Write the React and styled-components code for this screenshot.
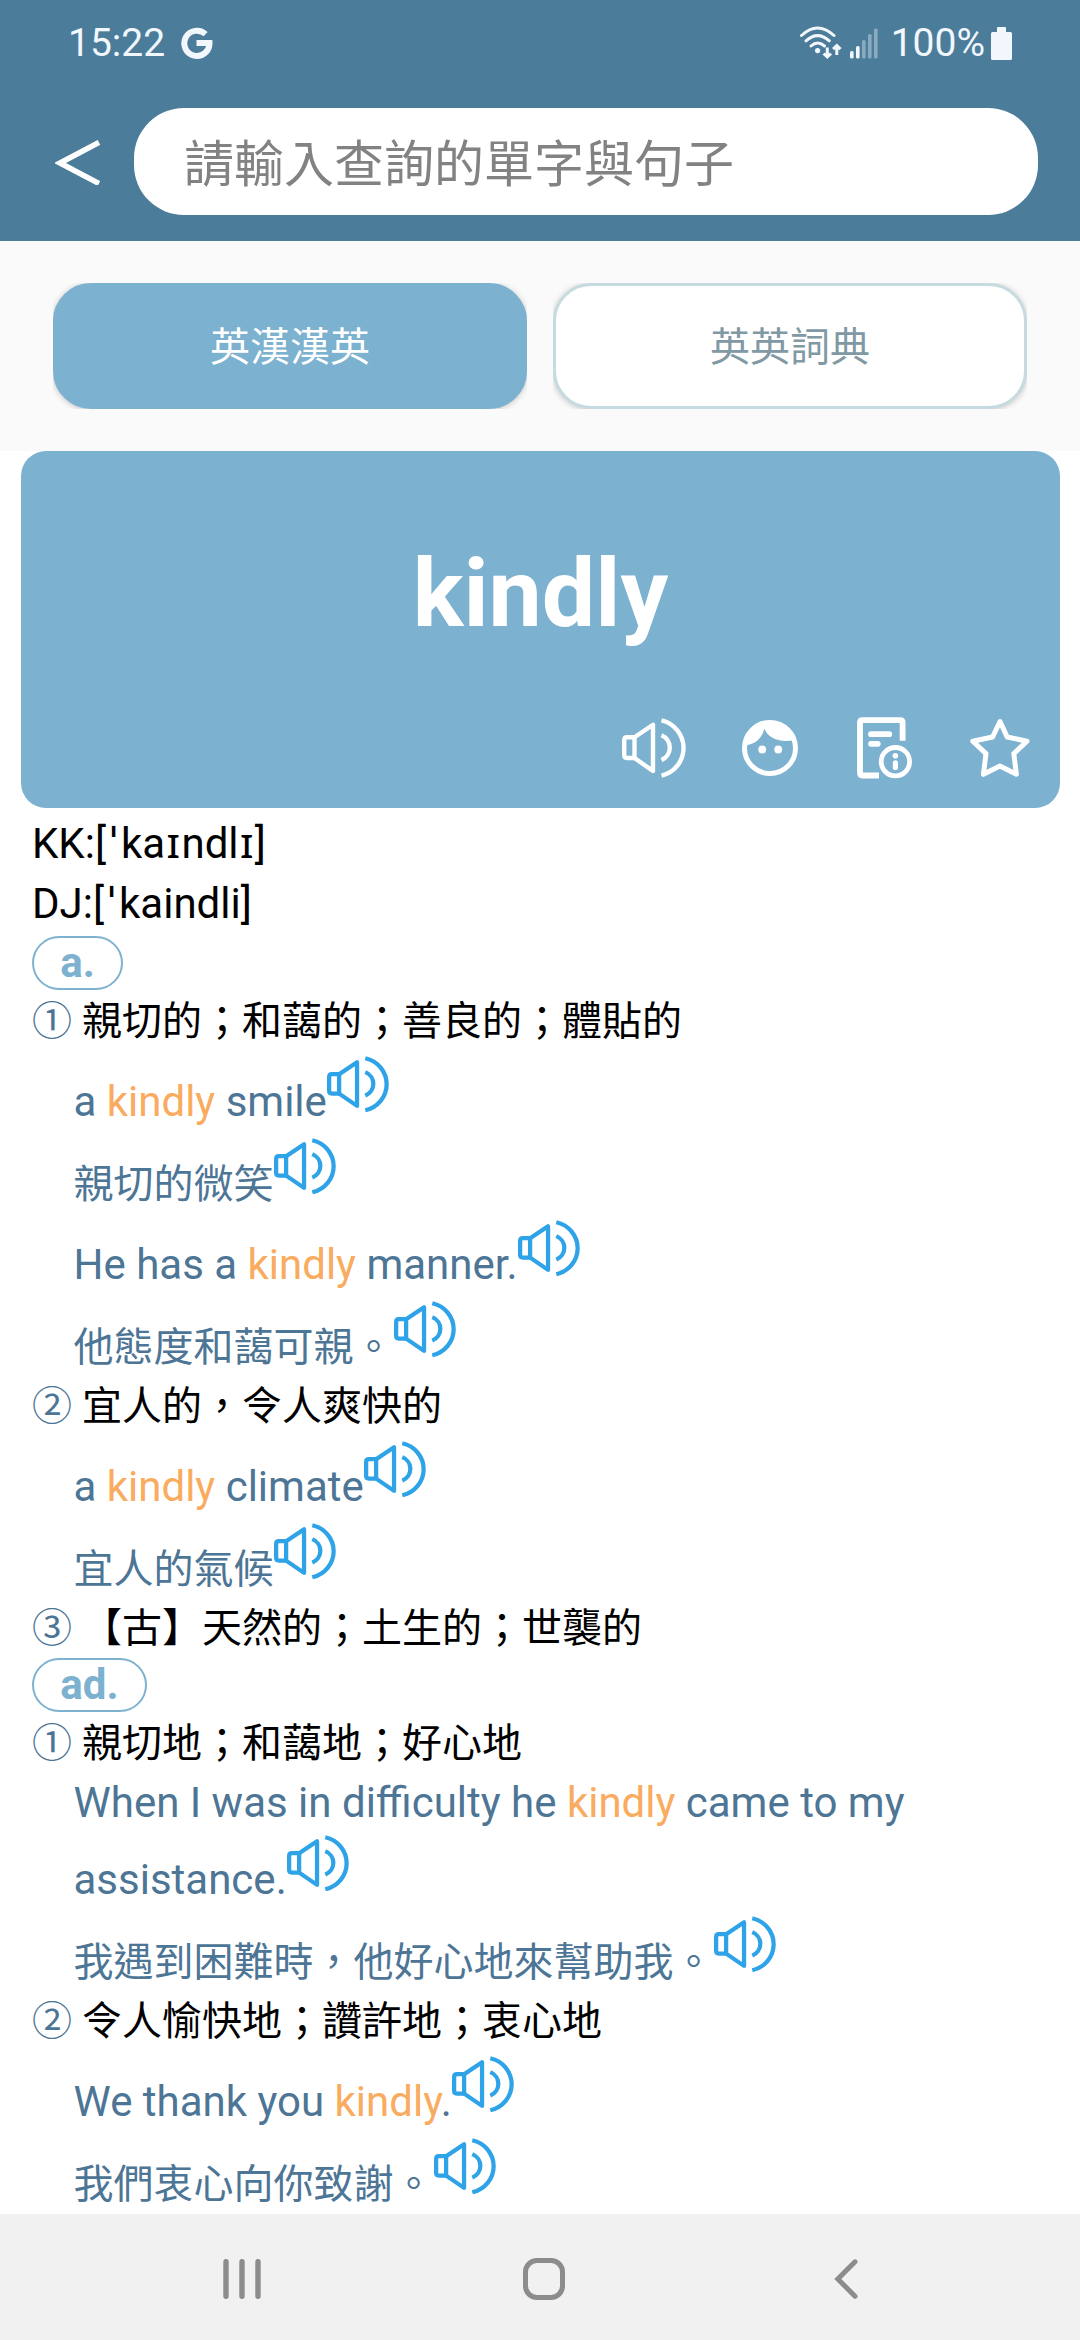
import styled, { createGlobalStyle } from 'styled-components';

const GlobalStyle = createGlobalStyle`
  * { box-sizing: border-box; }

  body {
    margin: 0;
    background: #ffffff;
    font-family: Roboto, 'Noto Sans CJK TC', 'Noto Sans', sans-serif;
  }

  svg { display: block; flex-shrink: 0; }
`;

const Screen = styled.div`
  display: flex;
  flex-direction: column;
  width: 1080px;
  height: 2340px;
  overflow: hidden;
  background: #ffffff;
`;

const Header = styled.header`
  height: 241px;
  background: #4b7d9a;
`;

const StatusBar = styled.div`
  display: flex;
  align-items: center;
  justify-content: space-between;
  height: 86px;
  padding: 0 68px;
  color: #f1f7fd;
  font-size: 39px;
  line-height: 46px;
`;

const StatusGroup = styled.div`
  display: flex;
  align-items: center;
`;

const Clock = styled.span`
  margin-right: 16px;
`;

const Signal = styled.span`
  margin-left: 8px;
`;

const Percent = styled.span`
  margin: 0 6px 0 13px;
`;

const SearchRow = styled.div`
  display: flex;
  align-items: center;
  margin-top: 22px;
  padding: 0 42px 0 55px;
  gap: 34px;
`;

const SearchBox = styled.div`
  display: flex;
  align-items: center;
  flex: 1;
  height: 107px;
  padding: 0 0 4px 50px;
  border-radius: 50px;
  background: #ffffff;
  color: #828282;
  font-family: 'Noto Sans CJK TC', sans-serif;
  font-size: 50px;
  line-height: 70px;
`;

const Tabs = styled.div`
  display: flex;
  gap: 26px;
  height: 210px;
  padding: 42px 53px;
  background: #fafafa;
`;

const TabSlot = styled.div`
  flex: 1;
  height: 126px;
  overflow: hidden;
`;

const Tab = styled.div`
  display: flex;
  align-items: center;
  justify-content: center;
  height: 100%;
  padding-bottom: 4px;
  border: 3px solid ${({ $active }) => ($active ? '#7cb1d0' : '#c6dbdf')};
  border-radius: 38px;
  background: ${({ $active }) => ($active ? '#7cb1d0' : '#ffffff')};
  color: ${({ $active }) => ($active ? '#ffffff' : '#8199a4')};
  box-shadow: 0 1px 6px rgba(0, 0, 0, 0.22);
  font-family: 'Noto Sans CJK TC', sans-serif;
  font-size: 40px;
  line-height: 58px;
`;

const WordCard = styled.section`
  display: flex;
  flex-direction: column;
  height: 357px;
  margin: 0 20px 0 21px;
  border-radius: 25px;
  background: #7cb1d0;
  color: #ffffff;
`;

const Word = styled.h1`
  margin: 87px 0 0;
  font-size: 95px;
  font-weight: 700;
  line-height: 112px;
  text-align: center;
`;

const Actions = styled.div`
  display: flex;
  justify-content: flex-end;
  margin-top: 67px;
  padding-right: 2px;
`;

const Action = styled.div`
  display: flex;
  align-items: center;
  justify-content: center;
  width: 115.3px;
  height: 62px;
`;

const Definition = styled.main`
  flex: 1;
  padding: 6px 0 0 32px;
  color: #000000;
`;

const Phonetic = styled.div`
  height: 60px;
  font-size: 42px;
  line-height: 60px;
`;

const IpaMark = styled.span`
  display: inline-block;
  width: ${({ $stress }) => ($stress ? '15px' : '16.3px')};
  font-family: 'Noto Sans', sans-serif;
  line-height: 48px;
  text-align: center;
`;

const PartRow = styled.div`
  display: flex;
  align-items: center;
  height: 57.3px;
`;

const PartBadge = styled.span`
  height: 54px;
  padding: 0 26.3px;
  border: 2px solid #7fb2cf;
  border-radius: 27px;
  color: #7cb1d0;
  font-size: 42px;
  font-weight: 700;
  line-height: 50px;
`;

const Sense = styled.div`
  display: flex;
  align-items: center;
  gap: 10px;
  height: 58.5px;
  padding-bottom: 5px;
  font-family: 'Noto Sans CJK TC', sans-serif;
  font-size: 40px;
  line-height: 58px;
  white-space: nowrap;
`;

const SenseNumber = styled.span`
  color: #4d7595;
`;

const ExampleLine = styled.div`
  display: flex;
  align-items: flex-end;
  height: ${({ $wrapped }) => ($wrapped ? '55.8px' : '81.6px')};
  padding-left: 41.5px;
  color: #4d7595;
  white-space: nowrap;
`;

const English = styled.span`
  margin-bottom: ${({ $wrapped }) => ($wrapped ? '0' : '4.5px')};
  font-size: 42px;
  line-height: 50px;
`;

const Chinese = styled.span`
  margin-bottom: 3px;
  font-family: 'Noto Sans CJK TC', sans-serif;
  font-size: 40px;
  line-height: 58px;
`;

const Keyword = styled.span`
  color: #f9ab60;
`;

const InlineSpeaker = styled.span`
  margin-bottom: 18.5px;
  color: #2ea3e8;
`;

const NavBar = styled.nav`
  display: flex;
  justify-content: center;
  align-items: center;
  height: 126px;
  padding: 4px 0 0 8px;
  background: #f1f1f1;
`;

const NavItem = styled.div`
  display: flex;
  justify-content: center;
  width: 302px;
`;

const entries = [
  {
    part: 'a.',
    senses: [
      {
        number: '①',
        text: '親切的；和藹的；善良的；體貼的',
        examples: [
          { en: 'a *kindly* smile' },
          { zh: '親切的微笑' },
          { en: 'He has a *kindly* manner.' },
          { zh: '他態度和藹可親。' },
        ],
      },
      {
        number: '②',
        text: '宜人的，令人爽快的',
        examples: [{ en: 'a *kindly* climate' }, { zh: '宜人的氣候' }],
      },
      { number: '③', text: '【古】天然的；土生的；世襲的', examples: [] },
    ],
  },
  {
    part: 'ad.',
    senses: [
      {
        number: '①',
        text: '親切地；和藹地；好心地',
        examples: [
          { en: 'When I was in difficulty he *kindly* came to my', wrapped: true },
          { en: 'assistance.' },
          { zh: '我遇到困難時，他好心地來幫助我。' },
        ],
      },
      {
        number: '②',
        text: '令人愉快地；讚許地；衷心地',
        examples: [{ en: 'We thank you *kindly*.' }, { zh: '我們衷心向你致謝。' }],
      },
    ],
  },
];

function SpeakerIcon({ width, height }) {
  return (
    <svg width={width} height={height} viewBox="0 0 65 60" preserveAspectRatio="none" fill="none" stroke="currentColor" strokeWidth="4.4" strokeLinejoin="round">
      <path d="M12.5 19.3H5Q2.2 19.3 2.2 22.3V37Q2.2 40 5 40H12.5Z" />
      <path d="M12.5 19.3L31 6.7V53L12.5 40" />
      <path d="M39.5 2.4A28.3 28.3 0 0 1 39.5 57.6" />
      <path d="M39.5 17.2A13.4 13.4 0 0 1 39.5 42" />
    </svg>
  );
}

function FaceIcon() {
  return (
    <svg width="56" height="56" viewBox="0 0 56 56">
      <circle cx="28" cy="28" r="25.5" fill="none" stroke="currentColor" strokeWidth="5" />
      <path d="M3.5 25.4C13 24 20 19 22.3 8.5C26 17.5 35 22.5 51 20.5A25 25 0 0 0 28 3A25 25 0 0 0 3.5 25.4Z" fill="currentColor" />
      <circle cx="20.2" cy="29.5" r="3.9" fill="currentColor" />
      <circle cx="36.2" cy="29.5" r="3.9" fill="currentColor" />
    </svg>
  );
}

function NoteInfoIcon() {
  return (
    <svg width="56" height="62" viewBox="0 0 56 62" fill="none" stroke="currentColor" strokeWidth="5.8">
      <path d="M45.6 23.7V5.5Q45.6 3.2 43.3 3.2H5.5Q3 3.2 3 5.5V56Q3 58.5 5.5 58.5H22" />
      <path d="M14 17.2H32.2M14 26.8H20.8" strokeLinecap="round" />
      <circle cx="38.4" cy="44.7" r="14.2" strokeWidth="4.8" />
      <circle cx="38.4" cy="38.7" r="2.8" fill="currentColor" stroke="none" />
      <path d="M38.4 45.8V50.5" strokeWidth="5.2" strokeLinecap="round" />
    </svg>
  );
}

function StarIcon() {
  return (
    <svg width="60" height="60" viewBox="0 0 60 60" fill="none" stroke="currentColor" strokeWidth="5" strokeLinejoin="round">
      <path d="M30 3.5L37.2 19L57 23.2L43.8 35.6L46.4 56.3L29.9 48L13.4 56.3L16 35.6L2.8 23.2L22.6 19Z" />
    </svg>
  );
}

function GoogleIcon() {
  return (
    <svg width="32" height="32" viewBox="0 0 32 32" fill="none" stroke="currentColor" strokeWidth="6">
      <path d="M24.6 7.2A12.6 12.6 0 1 0 28.5 16H15.5" />
    </svg>
  );
}

function WifiIcon() {
  return (
    <svg width="42" height="34" viewBox="0 0 42 34" fill="none" stroke="currentColor" strokeWidth="3">
      <path d="M1.5 9.5Q17.5 -5.5 34 9.5M6 14.8Q17.5 4.5 29.3 14.8M11 20Q17.5 14 24.5 20" strokeLinecap="round" />
      <circle cx="17.6" cy="24.6" r="2.6" fill="currentColor" stroke="none" />
      <path d="M27.3 21.5V30.5M23.6 27.5L27.3 31L31 27.5M36.8 29V20M33.1 23.2L36.8 19.6L40.5 23.2" />
    </svg>
  );
}

function SignalIcon() {
  return (
    <svg width="28" height="34" viewBox="0 0 28 34" fill="currentColor">
      <rect x="0" y="25" width="3.6" height="7.5" rx="1.5" />
      <rect x="6" y="20" width="3.6" height="12.5" rx="1.5" />
      <g opacity="0.38">
        <rect x="12" y="14" width="3.6" height="18.5" rx="1.5" />
        <rect x="18" y="8" width="3.6" height="24.5" rx="1.5" />
        <rect x="24" y="2.5" width="3.6" height="30" rx="1.5" />
      </g>
    </svg>
  );
}

function BatteryIcon() {
  return (
    <svg width="21" height="33" viewBox="0 0 21 33" fill="currentColor">
      <path d="M6 1Q6 0 7 0H14Q15 0 15 1V5H19.5Q21 5 21 6.5V31.5Q21 33 19.5 33H1.5Q0 33 0 31.5V6.5Q0 5 1.5 5H6Z" />
    </svg>
  );
}

// words between asterisks are the looked-up word
function highlight(text) {
  return text.split('*').map((part, i) => (i % 2 ? <Keyword key={i}>{part}</Keyword> : part));
}

function ipa(text) {
  return text
    .split(/([ˈɪ])/)
    .map((part, i) => (i % 2 ? <IpaMark key={i} $stress={part === 'ˈ'}>{part}</IpaMark> : part));
}

function Example({ en, zh, wrapped }) {
  return (
    <ExampleLine $wrapped={wrapped}>
      {en ? <English $wrapped={wrapped}>{highlight(en)}</English> : <Chinese>{zh}</Chinese>}
      {!wrapped && (
        <InlineSpeaker>
          <SpeakerIcon width={63} height={56.5} />
        </InlineSpeaker>
      )}
    </ExampleLine>
  );
}

export default function App() {
  return (
    <Screen>
      <GlobalStyle />
      <Header>
        <StatusBar>
          <StatusGroup>
            <Clock>15:22</Clock>
            <GoogleIcon />
          </StatusGroup>
          <StatusGroup>
            <WifiIcon />
            <Signal><SignalIcon /></Signal>
            <Percent>100%</Percent>
            <BatteryIcon />
          </StatusGroup>
        </StatusBar>
        <SearchRow>
          <svg width="45" height="46" viewBox="0 0 45 46" fill="none" stroke="#ffffff" strokeWidth="5.5">
            <path d="M44 3.5L5 24L44 44.5" />
          </svg>
          <SearchBox>請輸入查詢的單字與句子</SearchBox>
        </SearchRow>
      </Header>

      <Tabs>
        <TabSlot><Tab $active>英漢漢英</Tab></TabSlot>
        <TabSlot><Tab>英英詞典</Tab></TabSlot>
      </Tabs>

      <WordCard>
        <Word>kindly</Word>
        <Actions>
          <Action><SpeakerIcon width={65} height={60} /></Action>
          <Action><FaceIcon /></Action>
          <Action><NoteInfoIcon /></Action>
          <Action><StarIcon /></Action>
        </Actions>
      </WordCard>

      <Definition>
        <Phonetic>{ipa('KK:[ˈkaɪndlɪ]')}</Phonetic>
        <Phonetic>{ipa('DJ:[ˈkaindli]')}</Phonetic>
        {entries.map((entry) => (
          <div key={entry.part}>
            <PartRow>
              <PartBadge>{entry.part}</PartBadge>
            </PartRow>
            {entry.senses.map((sense) => (
              <div key={sense.number}>
                <Sense>
                  <SenseNumber>{sense.number}</SenseNumber>
                  <span>{sense.text}</span>
                </Sense>
                {sense.examples.map((example, i) => (
                  <Example key={i} {...example} />
                ))}
              </div>
            ))}
          </div>
        ))}
      </Definition>

      <NavBar>
        <NavItem>
          <svg width="38" height="40" viewBox="0 0 38 40" fill="none" stroke="#8c8c8c" strokeWidth="5.4" strokeLinecap="round">
            <path d="M3 2.7V37.3M19 2.7V37.3M35 2.7V37.3" />
          </svg>
        </NavItem>
        <NavItem>
          <svg width="42" height="42" viewBox="0 0 42 42" fill="none" stroke="#8c8c8c" strokeWidth="5">
            <rect x="2.5" y="2.5" width="37" height="37" rx="11.5" />
          </svg>
        </NavItem>
        <NavItem>
          <svg width="24" height="40" viewBox="0 0 24 40" fill="none" stroke="#8c8c8c" strokeWidth="5" strokeLinecap="round">
            <path d="M21 2.8L3.8 20L21 37.2" />
          </svg>
        </NavItem>
      </NavBar>
    </Screen>
  );
}
